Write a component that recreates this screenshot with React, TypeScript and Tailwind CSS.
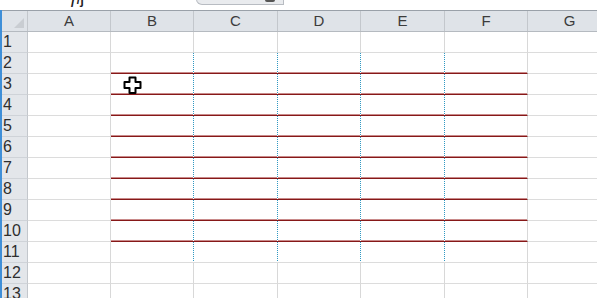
import React from "react";

const cols = [
  { n: "A", w: 83 },
  { n: "B", w: 83 },
  { n: "C", w: 84 },
  { n: "D", w: 83 },
  { n: "E", w: 84 },
  { n: "F", w: 83 },
  { n: "G", w: 84 },
];
const rows = Array.from({ length: 13 }, (_, i) => i + 1);

function Cell({ r, c, w }: { r: number; c: number; w: number }) {
  const inBlock = c >= 1 && c <= 5;
  const dotted = inBlock && c <= 4 && r >= 2 && r <= 11;
  const red = inBlock && r >= 2 && r <= 10;
  const right = dotted ? "" : "border-r border-r-[#d8d8d8]";
  const bottom = red
    ? "border-b border-b-[#861818] shadow-[inset_0_-1px_0_#c98a8a]"
    : "border-b border-b-[#dcdcdc]";
  return (
    <div
      className={`shrink-0 h-full bg-white flex justify-end ${right} ${bottom}`}
      style={{ width: w }}
    >
      {dotted && (
        <div className="w-[1px] shrink-0 h-full bg-[linear-gradient(to_bottom,#2f98c2_0,#2f98c2_1px,#ffffff_1px)] bg-[length:1px_2px] bg-repeat-y" />
      )}
    </div>
  );
}

function Cursor() {
  return (
    <svg
      className="absolute left-[123px] top-[76px]"
      width="20"
      height="19"
      viewBox="0 0 20 19"
    >
      <path
        d="M6.5 1.5 H12.5 V6 H17.5 V12 H12.5 V17 H6.5 V12 H1.5 V6 H6.5 Z"
        fill="white"
        stroke="black"
        strokeWidth="2"
        strokeLinejoin="round"
      />
    </svg>
  );
}

export default function App() {
  return (
    <div
      className="relative w-[597px] h-[298px] overflow-hidden bg-white"
      style={{ fontFamily: '"Liberation Sans", Arial, sans-serif' }}
    >
      {/* top strip */}
      <div className="relative h-[10px] bg-white">
        <div className="absolute left-[70px] -top-[6px] text-[12px] font-bold text-[#222] leading-none">
          ƒ/ʃ
        </div>
        <div className="absolute left-[196px] -top-[1px] w-[88px] h-[6px] rounded-bl-[10px] border border-[#b8bcc2] bg-[#e9ebee]">
          <div className="absolute right-[8px] -top-[2px] w-[10px] h-[4px] bg-[#555] rounded-sm" />
        </div>
      </div>
      <div className="flex">
        <div className="w-[2px] shrink-0 bg-[#3f8fd8]" />
        <div className="flex flex-col">
          {/* header */}
          <div className="flex h-[22px] border-t border-t-[#9aa1a9] border-b border-b-[#b5bac0] bg-[#dfe3e8]">
            <div className="relative w-[26px] shrink-0 border-r border-r-[#c3c7cc]">
              <div className="absolute right-[3px] bottom-[3px] w-0 h-0 border-l-[10px] border-l-transparent border-b-[10px] border-b-[#c9cdd2]" />
            </div>
            {cols.map((c) => (
              <div
                key={c.n}
                className="shrink-0 flex items-center justify-center border-r border-r-[#c3c7cc] text-[15px] text-[#3c3c3c]"
                style={{ width: c.w }}
              >
                {c.n}
              </div>
            ))}
          </div>
          {rows.map((r) => (
            <div key={r} className="flex h-[21px]">
              <div className="w-[26px] shrink-0 bg-[#e3e6ea] border-r border-r-[#c3c7cc] border-b border-b-[#cfd3d8] pl-[1px] flex items-center text-[16px] text-[#2e2e2e] leading-none">
                {r}
              </div>
              {cols.map((c, ci) => (
                <Cell key={c.n} r={r} c={ci} w={c.w} />
              ))}
            </div>
          ))}
        </div>
      </div>
      <Cursor />
    </div>
  );
}
